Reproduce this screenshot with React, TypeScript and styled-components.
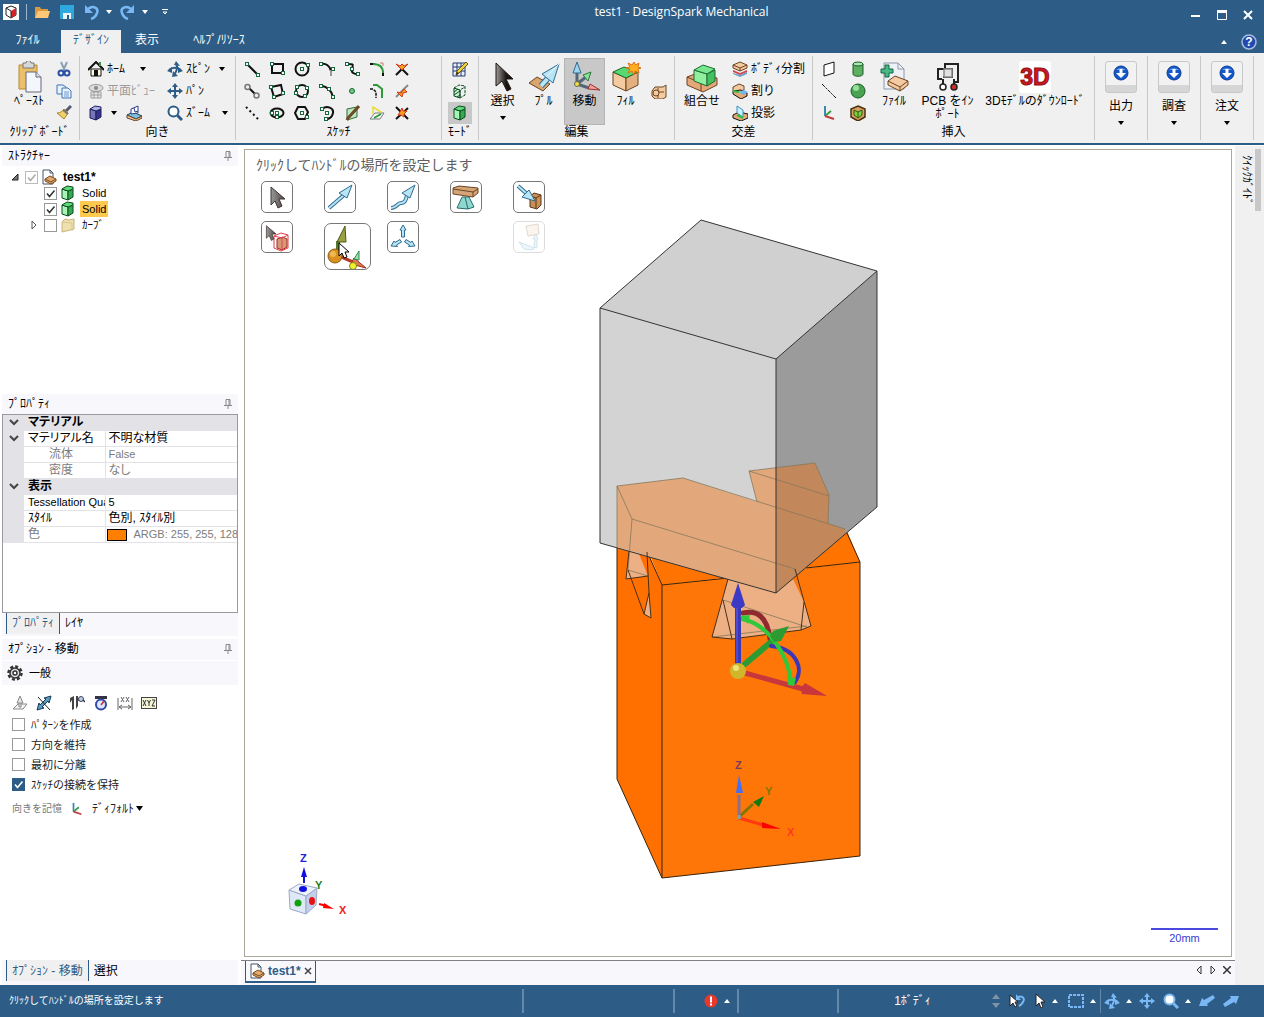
import React from "react";
import styled, { createGlobalStyle } from "styled-components";

const BLUE = "#2d5d86";
const PALE = "#f7f7fc";
const FONT = '"Liberation Sans", "Noto Sans CJK JP", sans-serif';

const Global = createGlobalStyle`
  * { box-sizing: border-box; }
  body { margin: 0; background: #fff; color: #000; font: 12px/16px ${FONT}; }
  button, input, select { font: inherit; color: inherit; }
  svg { display: block; flex: none; }
`;

/* ---------- primitives ---------- */
const Window = styled.div`
  display: flex; flex-direction: column; min-height: 100vh; overflow: hidden;
`;
const PlainButton = styled.button`
  display: flex; align-items: center; justify-content: center;
  border: 0; padding: 0; background: none; white-space: nowrap; cursor: default;
`;

const Pic = ({ w = 16, h, vb, children }: { w?: number; h?: number; vb?: string; children: React.ReactNode }) => (
  <svg width={w} height={h ?? w} viewBox={vb ?? `0 0 ${w} ${h ?? w}`} aria-hidden="true">{children}</svg>
);
const Caret = ({ up = false, color = "#000" }: { up?: boolean; color?: string }) => (
  <Pic w={6} h={4}><path d={up ? "M0 4h6L3 0z" : "M0 0h6L3 4z"} fill={color} /></Pic>
);

/* ---------- title bar ---------- */
const TitleBar = styled.header`
  display: flex; height: 30px; background: ${BLUE}; color: #fff; padding-bottom: 6px;
`;
const QuickAccess = styled.div`display: flex; align-items: center; width: 180px; padding-left: 3px;`;
const QuickButton = styled(PlainButton)<{ $w: number }>`width: ${(p) => p.$w}px; height: 24px;`;
const BarLine = styled.span`width: 1px; height: 16px; background: #9fb5c9; margin: 0 3px 0 7px;`;
const TitleText = styled.h1`
  flex: 1; margin: 0; text-align: center; font: 12px/24px "Open Sans", sans-serif;
`;
const WindowButtons = styled.div`display: flex; align-items: center; padding: 6px 3px 0 0;`;
const WindowButton = styled(PlainButton)`width: 26px; height: 24px;`;

const TabBar = styled.nav`display: flex; height: 23px; background: ${BLUE}; color: #fff;`;
const RibbonTab = styled.button<{ $active?: boolean; $w: number }>`
  width: ${(p) => p.$w}px; border: 0; padding: 0 0 4px; line-height: 18px; white-space: nowrap;
  background: ${(p) => (p.$active ? "#f0f0f0" : "transparent")};
  color: ${(p) => (p.$active ? BLUE : "#fff")};
`;
const TabBarEnd = styled.div`display: flex; align-items: center; margin-left: auto; padding-right: 7px; gap: 14px;`;

/* ---------- ribbon ---------- */
const Ribbon = styled.div`
  display: flex; height: 92px; padding: 3px 0; background: #f0f0f0; border-bottom: 2px solid ${BLUE};
`;
const Group = styled.section<{ $w: number }>`
  flex: none; display: flex; flex-direction: column; width: ${(p) => p.$w}px; height: 84px; padding-top: 2px;
  border-right: 1px solid #c8c8c8;
`;
const GroupBody = styled.div<{ $pad?: number }>`display: flex; height: 66px; padding-left: ${(p) => p.$pad ?? 0}px;`;
const GroupName = styled.div`text-align: center; line-height: 16px;`;
const Stack = styled.div<{ $w: number }>`
  display: grid; grid-template-rows: repeat(3, 22px); width: ${(p) => p.$w}px;
`;
const RowButton = styled(PlainButton)<{ $dim?: boolean }>`
  justify-content: flex-start; gap: 3px; color: ${(p) => (p.$dim ? "#9a9a9a" : "#000")};
`;
const CaretGap = styled.span<{ $w: number }>`width: ${(p) => p.$w}px; display: flex; justify-content: flex-end;`;
const RowPair = styled.div`display: flex; align-items: center; gap: 9px;`;
const SketchGrid = styled.div`
  display: grid; grid-template: repeat(3, 22px) / repeat(7, 25px);
`;
const IconButton = styled(PlainButton)<{ $on?: boolean; $w?: number }>`
  width: ${(p) => (p.$w ? p.$w + "px" : "auto")};
  background: ${(p) => (p.$on ? "#c8c8c8" : "transparent")};
`;
const BigButton = styled(PlainButton)<{ $w: number; $on?: boolean }>`
  flex-direction: column; justify-content: flex-start; width: ${(p) => p.$w}px; padding-top: 3px; height: 67px;
  line-height: 13px; white-space: normal;
  background: ${(p) => (p.$on ? "#c8c8c8" : "transparent")};
  outline: ${(p) => (p.$on ? "1px solid #b4b4b4" : "none")}; outline-offset: -1px;
`;
const BigLabel = styled.span`margin: 2px 0 8px; text-align: center; white-space: pre;`;
const FramedIcon = styled.span`
  display: flex; justify-content: center; width: 32px; height: 32px; padding-top: 3px; margin-bottom: 5px;
  border: 1px solid #c8c8c8; border-radius: 3px;
  background: linear-gradient(#f2f2f2 23px, #d6d6d6 23px);
`;

/* ---------- main area ---------- */
const Main = styled.main`flex: 1; display: flex; min-height: 0;`;
const Side = styled.aside`
  display: flex; flex-direction: column; width: 238px; flex: none; padding: 1px 0 0 2px; background: #fff;
`;
const PanelHead = styled.div<{ $h: number }>`
  display: flex; justify-content: space-between; align-items: center; height: ${(p) => p.$h}px;
  padding: 0 6px; background: ${PALE}; color: #000;
`;
const PanelTitle = styled.h2`margin: 0; font-size: 12px; font-weight: 400; line-height: 16px;`;
const Tree = styled.ul`flex: 229 1 0; margin: 0; padding: 3px 0 0 8px; list-style: none;`;
const TreeRow = styled.li<{ $indent: number }>`
  display: flex; align-items: center; height: 16px; padding-left: ${(p) => p.$indent}px;
`;
const Twisty = styled.span`width: 15px; display: flex; align-items: center;`;
const Check = styled.input`
  appearance: none; flex: none; width: 13px; height: 13px; margin: 0; border: 1px solid #999; background: #fff;
`;
const CheckBox = styled.span<{ $filled?: boolean; $pale?: boolean }>`
  display: grid; width: 13px; height: 13px; flex: none;
  > * { grid-area: 1 / 1; }
  input:checked { background: ${(p) => (p.$filled ? BLUE : "#fff")}; border-color: ${(p) => (p.$filled ? BLUE : p.$pale ? "#bbb" : "#999")}; }
  svg { pointer-events: none; }
`;
const TreeIcon = styled.span`width: 23px; padding-left: 3px;`;
const TreeLabel = styled.label<{ $hot?: boolean; $bold?: boolean }>`
  padding: 0 2px; line-height: 16px; font-size: ${(p) => (p.$bold ? 12 : 11)}px;
  background: ${(p) => (p.$hot ? "#ffc84f" : "transparent")};
  font-weight: ${(p) => (p.$bold ? 700 : 400)};
`;
const PropBox = styled.div`height: 199px; border: 1px solid #9a9a9e; background: #fff; overflow: hidden;`;
const PropTable = styled.table`
  width: 100%; table-layout: fixed; border-collapse: collapse;
  td, th { height: 16px; padding: 0; line-height: 15px; font-weight: 400; text-align: left; white-space: nowrap; overflow: hidden;
    border-bottom: 1px solid #e2e2e7; }
  font-feature-settings: "palt";
`;
const Latin = styled.span`font-size: 11px;`;
const Gutter = styled.td`width: 21px; background: #e2e2e7;`;
const SectionName = styled.th`&& { background: #e2e2e7; font-weight: 700; padding-left: 4px; }`;
const PropName = styled.th<{ $dim?: boolean; $indent?: boolean }>`
  && { padding-left: ${(p) => (p.$indent ? 25 : 4)}px; color: ${(p) => (p.$dim ? "#7c7c7c" : "#000")}; }
`;
const PropValue = styled.td<{ $dim?: boolean }>`
  && { padding-left: 3px; border-left: 1px solid #e2e2e7; color: ${(p) => (p.$dim ? "#7c7c7c" : "#000")}; }
`;
const ColorCell = styled.div`display: flex; align-items: center; gap: 7px; height: 15px;`;
const Swatch = styled.span`flex: none; width: 20px; height: 12px; margin-left: -2px; background: #ff8000; border: 1px solid #000;`;
const PanelTabs = styled.div<{ $h: number }>`
  display: flex; height: ${(p) => p.$h}px; padding-left: 4px; background: ${PALE};
`;
const PanelTab = styled.button<{ $active?: boolean }>`
  height: 21px; padding: 0 5px; border: solid ${BLUE}; border-width: ${(p) => (p.$active ? "0 1px" : "0")};
  background: ${(p) => (p.$active ? "#f0f0f0" : "none")}; color: ${(p) => (p.$active ? BLUE : "#000")};
`;
const General = styled.div`
  display: flex; align-items: center; gap: 6px; height: 24px; margin-top: 1px; padding-left: 5px; background: ${PALE}; font-size: 11px;
`;
const Options = styled.div`flex: 272 1 0; padding: 8px 0 0 10px; font-size: 11px; color: #222;`;
const OptionTools = styled.div`display: flex; height: 20px; margin-bottom: 2px;`;
const OptionTool = styled(PlainButton)<{ $gap?: boolean }>`width: 24px; justify-content: flex-start; margin-right: ${(p) => (p.$gap ? 9 : 0)}px;`;
const OptionRow = styled.label`display: flex; align-items: center; gap: 6px; height: 20px;`;
const Remember = styled.div`display: flex; align-items: center; gap: 8px; height: 28px; color: #777; font-size: 10px;`;
const RememberSelect = styled.select`
  appearance: none; border: 0; padding: 0; margin: 0; background: none; width: 42px; height: 16px; color: #222;
  font-size: 12px; line-height: 16px;
`;
const SelectWrap = styled.span`display: flex; align-items: center; gap: 2px;`;

/* ---------- document ---------- */
const Doc = styled.div`flex: 1; min-width: 0; display: flex; flex-direction: column; padding: 0 0 0 3px;`;
const CanvasFrame = styled.div`
  position: relative; flex: 1; min-height: 0; margin: 4px 3px 3px; border: 1px solid #aca899; background: #fff;
`;
const Scene = styled.svg`position: absolute; inset: 0; width: 100%; height: 100%;`;
const Overlay = styled.div`position: absolute; left: 11px; top: 6px;`;
const Prompt = styled.p`margin: 0; font-size: 14px; line-height: 18px; color: #606060; white-space: nowrap;`;
const ToolGrid = styled.div`
  display: grid; grid-template-columns: repeat(5, 63px); grid-auto-rows: 40px; padding: 7px 0 0 5px;
`;
const ToolButton = styled(PlainButton)<{ $big?: boolean; $off?: boolean }>`
  width: ${(p) => (p.$big ? 47 : 32)}px; height: ${(p) => (p.$big ? 47 : 32)}px;
  margin-top: ${(p) => (p.$big ? 2 : 0)}px; background: #fff;
  border: 1px solid #777; border-radius: ${(p) => (p.$big ? 7 : 5)}px; opacity: ${(p) => (p.$off ? 0.25 : 1)};
`;
const Triad = styled.div`position: absolute; left: 35px; bottom: 39px;`;
const ScaleBar = styled.div`
  position: absolute; right: 13px; bottom: 10px; width: 67px; border-top: 2px solid #4a4ae0; text-align: center;
  font-size: 11px; line-height: 16px; color: #3a3ad0;
`;
const DocTabs = styled.div`
  display: flex; align-items: flex-start; justify-content: space-between; height: 25px; padding: 0 2px 0 4px;
  border-top: 1px solid #7f7f86; background: ${PALE};
`;
const DocTab = styled.div`
  display: flex; align-items: center; gap: 3px; height: 22px; padding: 0 3px; border: 1px solid ${BLUE}; border-top: 0;
  border-bottom-width: 2px; color: ${BLUE}; font-weight: 700;
`;
const DocNav = styled.div`display: flex; gap: 2px; padding: 3px 0; button { width: 12px; height: 12px; }`;
const Dock = styled.div`width: 29px; flex: none; padding: 3px 3px 0 3px; background: #f0f0f0; margin-top: 1px;`;
const DockTab = styled.button`
  width: 23px; height: 62px; padding: 0; border: 0; border-right: 6px solid #c8c8c8; background: none;
  writing-mode: vertical-rl; text-orientation: sideways; font-size: 11px; line-height: 14px;
`;

/* ---------- status bar ---------- */
const Status = styled.footer`display: flex; align-items: center; height: 32px; background: ${BLUE}; color: #fff;`;
const StatusCell = styled.div<{ $w?: number; $line?: boolean }>`
  display: flex; align-items: center; justify-content: center; gap: 6px; height: 24px;
  flex: ${(p) => (p.$w ? `0 0 ${p.$w}px` : "1")};
  border-right: ${(p) => (p.$line ? "2px solid #6488a8" : "0")};
`;
const StatusText = styled.span`flex: 1; padding-left: 9px; font-size: 10px;`;
const StatusButton = styled(PlainButton)<{ $w: number }>`width: ${(p) => p.$w}px; height: 24px; gap: 6px; flex: none;`;
const StatusLine = styled.span`width: 1px; height: 24px; background: #6488a8;`;
const BarSpace = styled.span`width: 6px;`;
const LeftPad = styled(RowButton)`padding-left: 8px;`;
const CenterCell = styled.div`display: flex; justify-content: center;`;
const Spacer = styled.div`height: 3px;`;
const ErrorSlot = styled.button`display: flex; align-items: center; gap: 6px; border: 0; padding: 0 0 0 22px; background: none;`;
const StatusEnd = styled.span`width: 21px;`;

/* ---------- icons ---------- */
const Dots = ({ at }: { at: number[][] }) => (
  <>{at.map(([x, y], i) => <rect key={i} x={x - 1.5} y={y - 1.5} width="3" height="3" fill="#fff" stroke="#14683c" />)}</>
);
const K = { fill: "none", stroke: "#111", strokeWidth: 2 } as const;
const GreenCube = () => (
  <Pic><g stroke="#0b4a20" strokeLinejoin="round"><path d="M2 4l6 2v9l-6-2z" fill="#a6f5b4" /><path d="M8 6l5-2v8l-5 3z" fill="#35a850" /><path d="M2 4l5-3 6 1v2L8 6z" fill="#5ddb78" /></g></Pic>
);
const FileIcon = () => (
  <Pic><path d="M2 1h7l3 3v11H2z" fill="#fff" stroke="#456" /><path d="M9 1v3h3" fill="none" stroke="#456" /><path d="M4 10l5-3 6 3v2l-5 3-6-3z" fill="#e2aa6e" stroke="#7a4a1c" /><path d="M4 10l6 3 5-3" fill="none" stroke="#7a4a1c" /></Pic>
);
const Arrow4 = ({ color = "#2d5d86" }: { color?: string }) => (
  <Pic><path d="M8 0l3 4H9v3h3V5l4 3-4 3V9H9v3h2l-3 4-3-4h2V9H4v2L0 8l4-3v2h3V4H5z" fill={color} /></Pic>
);
const Spin = ({ color = "#2d5d86" }: { color?: string }) => (
  <Pic>
    <path d="M2 9c3-3 8-3 12 0" fill="none" stroke={color} strokeWidth="2" />
    <path d="M9 2c2 4 1 8-2 12" fill="none" stroke={color} strokeWidth="2" />
    <path d="M0 10l5-4v6zM16 10l-5-4v6zM9 0l4 5-6-1zM5 16l1-6 5 5z" fill={color} />
  </Pic>
);
const Lens = ({ stroke = "#2d5d86", fill = "#fff" }: { stroke?: string; fill?: string }) => (
  <Pic><circle cx="6.500" cy="6.500" r="5" fill={fill} stroke={stroke} strokeWidth="2" /><path d="M10.500 10.500l4.500 4.500" stroke={stroke} strokeWidth="3" /></Pic>
);
const Pin = () => (
  <Pic w={8} h={10}><path d="M2 6V.5h4V6M5 1v5M0 6.500h8M4 7v3" fill="none" stroke="#888" /></Pic>
);
const Pencil = () => (
  <><path d="M14 1l2 2-9 9-3 2 1-4z" fill="#e8d444" stroke="#6b5410" /><path d="M4 14l1-3 2 1z" fill="#222" /></>
);
const Wood = { fill: "#f4caa0", stroke: "#6b4422" } as const;
const Axes = ({ w = 16 }: { w?: number }) => (
  <Pic w={w} vb="0 0 16 16"><path d="M4 1v10" stroke="#3a8ab0" strokeWidth="2" /><path d="M4 11l6-5" stroke="#3a9a4a" strokeWidth="2" /><path d="M4 11l9 3" stroke="#c43c3c" strokeWidth="2" /></Pic>
);
const Cursor = () => (
  <><path d="M2 1v18l4-4 3 7 4-2-3-7h6z" fill="url(#cursorShade)" stroke="#3c3431" /><defs><linearGradient id="cursorShade"><stop offset="0" stopColor="#9a9898" /><stop offset="1" stopColor="#4b4442" /></linearGradient></defs></>
);

const sketchIcons: [string, React.ReactNode][] = [
  ["線", <><path d="M3 3l11 11" {...K} /><Dots at={[[3, 3], [14, 14]]} /></>],
  ["長方形", <><path d="M3 3h11v9H3z" {...K} /><Dots at={[[3, 3], [14, 12]]} /></>],
  ["円", <><circle cx="8" cy="8" r="6.500" {...K} /><Dots at={[[8, 8], [14, 4]]} /></>],
  ["接円弧", <><path d="M2 3c5-1 9 2 10 7" {...K} /><path d="M12 9v6" stroke="#999" strokeWidth="2" /><Dots at={[[2, 3], [14, 8]]} /></>],
  ["スプライン", <><path d="M3 3c9 0 5 1 5 5-1 4 2 5 6 5" {...K} /><Dots at={[[3, 3], [8, 8], [14, 13]]} /></>],
  ["コーナー", <><path d="M1 3h5M14 11v4" {...K} /><path d="M4 3c6 0 10 3 10 9" fill="none" stroke="#2a9a3a" strokeWidth="2" /><path d="M11 2h3v3" stroke="#c77" fill="none" /></>],
  ["トリム", <><path d="M2 14l6-6 6 6" {...K} /><path d="M2 3l6 6 6-6-4 2-2-2-2 2z" fill="#f6a020" stroke="#d83414" /></>],
  ["接線", <><path d="M4 4l8 8" {...K} /><circle cx="3.500" cy="4" r="2.500" fill="#eee" stroke="#777" strokeWidth="1.500" /><circle cx="12.500" cy="12.500" r="2.500" fill="#eee" stroke="#777" strokeWidth="1.500" /></>],
  ["3点長方形", <><path d="M2 4l10-2 2 9-9 3z" {...K} /><Dots at={[[2, 4], [14, 10], [5, 14]]} /></>],
  ["3点円", <><circle cx="8" cy="8" r="6" {...K} /><Dots at={[[3, 4], [13, 5], [11, 13], [2, 10]]} /></>],
  ["3点円弧", <><path d="M2 3c6 0 11 5 12 11" {...K} /><Dots at={[[2, 3], [10, 6], [14, 14]]} /></>],
  ["点", <circle cx="8" cy="8" r="2.500" fill="#6fc77a" stroke="#14683c" />],
  ["オフセット", <><path d="M1 6h3l3 3v6" fill="none" stroke="#111" strokeWidth="1.500" strokeDasharray="3 1" /><path d="M4 2h4l5 4v9" fill="none" stroke="#2a9a3a" strokeWidth="2" /></>],
  ["分割", <><path d="M2 14L14 2" {...K} stroke="#888" /><path d="M3 9l4 1 3-4 3 3-4 1-1 4z" fill="#f6a020" stroke="#d83414" /></>],
  ["構築線", <path d="M2 2l13 13" {...K} strokeDasharray="2 3" />],
  ["楕円", <><ellipse cx="8" cy="8" rx="6.500" ry="4.500" {...K} /><Dots at={[[3, 8], [8, 8], [8, 12]]} /></>],
  ["多角形", <><path d="M4 2h7l3 5-3 7H4L1 8z" {...K} /><Dots at={[[8, 8], [13, 12]]} /></>],
  ["掃引円弧", <><path d="M3 4c5-4 12-1 11 4s-5 6-7 6" {...K} /><Dots at={[[3, 4], [8, 8], [7, 14]]} /></>],
  ["面投影", <><path d="M3 4l10-2v10L3 15z" fill="#bfe6c0" stroke="#2c6a38" /><path d="M15 1L4 13l-1 2" stroke="#6b4c22" strokeWidth="3" fill="none" /></>],
  ["投影", <><path d="M1 14l5-6h9l-4 6z" fill="#fff" stroke="#777" /><path d="M5 13l7-4" stroke="#2a9a3a" strokeWidth="2" /><path d="M4 9V2l8 5" fill="none" stroke="#e6dc30" strokeWidth="1.500" /></>],
  ["曲げ", <><path d="M2 2l12 12M2 14L14 3" {...K} /><path d="M8 3l1 3 4 0-3 3 0 3-3-2-3 0 2-3z" fill="#f6a020" stroke="#d83414" /></>],
];

const DownBall = () => (
  <Pic><circle cx="8" cy="8" r="7" fill="#1557c8" stroke="#0b3c9a" /><path d="M3 5a6 4 0 0 1 10 0" fill="#6fa6f2" /><path d="M6.500 4h3v4H13l-5 5-5-5h3.500z" fill="#fff" /></Pic>
);
const BlueArrow = ({ d = "M4 26L19 13" }: { d?: string }) => (
  <><path d={d} fill="none" stroke="#2e6d92" strokeWidth="4" /><path d={d} fill="none" stroke="#b8e4f4" strokeWidth="2" /><path d="M27 3l-5 13-8-5z" fill="#b8e4f4" stroke="#2e6d92" /></>
);
const CheckMark = ({ color }: { color: string }) => (
  <Pic w={13}><path d="M3 6.500l2.500 3L10.500 3.500" fill="none" stroke={color} strokeWidth="1.500" /></Pic>
);

const Tick = ({ id, on, filled, pale }: { id: string; on?: boolean; filled?: boolean; pale?: boolean }) => (
  <CheckBox $filled={filled} $pale={pale}>
    <Check id={id} type="checkbox" defaultChecked={on} />
    {on && <CheckMark color={filled ? "#fff" : pale ? "#aaa" : "#333"} />}
  </CheckBox>
);

const Twist = () => <Pic w={10} h={7}><path d="M1 1l4 4 4-4" fill="none" stroke="#444" strokeWidth="2" /></Pic>;

/* ---------- 3D drawing ---------- */
const Model = () => (
  <Scene viewBox="245 150 986 806" preserveAspectRatio="xMidYMid meet" role="img" aria-label="3D">
    <path d="M617 545V779l45 99V585l-13-30z" fill="#ff7000" />
    <path d="M662 585l198-23V856l-198 22z" fill="#ff7608" />
    <path d="M617 545l200-40 30 26 13 31-198 23-13-32z" fill="#ff7300" />
    <path d="M617 545V779l45 99 198-22V562l-14-31M662 878V585M649 556l13 29 66-7M806 568l54-6" fill="none" stroke="#3b2308" />
    <path d="M600 308l101-88 176 51-101 88z" fill="#d0d0d0" />
    <path d="M600 308l176 51v234l-176-50z" fill="#d3d3d3" />
    <path d="M776 359l101-88v236l-101 86z" fill="#9b9b9b" />
    <path d="M617 486l66-8 93 30v85l-159-46zM749 471l27-3v40l-19-6z" fill="#e2a87c" />
    <path d="M776 468l39-5 14 32-1 28 17 6 1 4-70 60z" fill="#c2875a" />
    <g fill="#ecb084">
      <path d="M629 551l10 3 9 22-22 3zM649 593l2 25-7-4z" />
      <path d="M728 579l48 14 17-14 11 23 7 24-10 4-69 9-20-2z" />
    </g>
    <path d="M617 547v-61l66-8 162 51M617 486l15 33 163 50M632 519l-4 51 20 6M757 502l-8-31 66-8 14 32-1 28M749 471l80 25M723 600l84 27M712 637l95-11" fill="none" stroke="#87785a" strokeOpacity=".8" />
    <path d="M629 551l-3 28 22-3M628 570l16 44 7 4-2-25-5 21M647 552l2 41M728 579l-16 58 20 2 69-9 10-4-16-57M723 600l9 39M804 602l-3 28" fill="none" stroke="#4a3018" />
    <path d="M600 308l101-88 176 51v236l-101 86-176-50zl176 51v234M776 359l101-88" fill="none" stroke="#333" />
    <g fill="none" strokeLinecap="round">
      <path d="M743 613c14-3 24 3 27 26" stroke="#8e2a30" strokeWidth="5" />
      <path d="M745 664l32-27" stroke="#2c9c32" strokeWidth="6" />
      <path d="M771 646c24 2 34 22 24 36" stroke="#3a38b8" strokeWidth="4" />
      <path d="M742 619c26 5 47 36 49 65" stroke="#30c83a" strokeWidth="4" />
      <path d="M745 673l58 16" stroke="#c8373c" strokeWidth="5" />
      <path d="M738 664v-57" stroke="#3a38b8" strokeWidth="6" />
      <path d="M737 662v-54" stroke="#625fe0" strokeWidth="1" />
    </g>
    <path d="M738 583l7 22-3 3h-8l-3-3z" fill="#3d39c5" />
    <path d="M789 626l-8 15-7 1-4-6 3-5z" fill="#2c9c32" />
    <path d="M740 616l10-1-2 9zM787 677l9 1-2 8-6-1z" fill="#30c83a" />
    <path d="M827 696l-22-13-4 5 1 6z" fill="#c8373c" />
    <circle cx="738" cy="671" r="8" fill="#d0b62a" /><circle cx="736" cy="668" r="3" fill="#f0e27a" />
    <path d="M739 817v-22" stroke="#8a6f8e" strokeWidth="3" /><path d="M739 775l4 18h-7z" fill="#3f70f8" />
    <path d="M739 817l14-13" stroke="#7c7800" strokeWidth="3" /><path d="M764 796l-5 11-6-5z" fill="#117a11" />
    <path d="M739 818l24 7" stroke="#ff3a10" strokeWidth="3" /><path d="M781 829l-19-7v6z" fill="#f00" />
    <rect x="737" y="815" width="4" height="4" fill="#8a98a0" />
    <g fontFamily="Liberation Sans, sans-serif" fontSize="11" fontWeight="700">
      <text x="735" y="769" fill="#7c3a5c">Z</text><text x="765" y="795" fill="#7c7800">Y</text><text x="787" y="836" fill="#ff3a20">X</text>
    </g>
  </Scene>
);

const down = ["出力", "調査", "注文"];

export default function App() {
  return (
    <Window>
      <Global />
      <TitleBar>
        <QuickAccess>
          <Pic w={16}><rect width="16" height="16" fill="#fff" /><path d="M8 2l5 2v7l-5 3-5-3V4z" fill="#fff" stroke="#222" /><path d="M8 7l5-3v7l-5 3z" fill="#d8222a" /><path d="M3 4l5 3v7" fill="none" stroke="#222" /></Pic>
          <BarLine />
          <QuickButton $w={25} aria-label="開く"><Pic><path d="M1 14V3h5l1 2h7v9z" fill="#d99a3e" /><path d="M1 14l3-7h12l-2 7z" fill="#ffc878" /></Pic></QuickButton>
          <QuickButton $w={25} aria-label="保存"><Pic w={14}><path d="M0 0h14v14H0z" fill="#2fa9dd" /><path d="M3 8h8v6H3z" fill="#eaf4fa" /><path d="M7 10h2v4H7z" fill="#2d5d86" /></Pic></QuickButton>
          <QuickButton $w={25} aria-label="元に戻す"><Pic><path d="M4 5c5-4 11-1 9 4-1 3-3 5-6 6" fill="none" stroke="#7ab8f5" strokeWidth="2.500" /><path d="M1 1v8h8z" fill="#7ab8f5" /></Pic></QuickButton>
          <QuickButton $w={10} aria-label="履歴"><Caret color="#fff" /></QuickButton>
          <QuickButton $w={26} aria-label="やり直し"><Pic><path d="M12 5C7 1 1 4 3 9c1 3 3 5 6 6" fill="none" stroke="#7ab8f5" strokeWidth="2.500" /><path d="M15 1v8H7z" fill="#7ab8f5" /></Pic></QuickButton>
          <QuickButton $w={10} aria-label="履歴"><Caret color="#fff" /></QuickButton>
          <QuickButton $w={30} aria-label="カスタマイズ"><Pic w={6} h={6}><path d="M0 .5h6M1 3h4L3 5z" fill="none" stroke="#fff" /></Pic></QuickButton>
        </QuickAccess>
        <TitleText>test1 - DesignSpark Mechanical</TitleText>
        <WindowButtons>
          <WindowButton aria-label="最小化"><Pic w={10} h={10}><path d="M0 6h9" stroke="#fff" strokeWidth="2" /></Pic></WindowButton>
          <WindowButton aria-label="最大化"><Pic w={10} h={10}><path d="M.5 1v8.500h9V1M0 1.500h10" fill="none" stroke="#fff" /><path d="M0 0h10v3H0z" fill="#fff" /></Pic></WindowButton>
          <WindowButton aria-label="閉じる"><Pic w={10} h={10}><path d="M1 1l8 8M9 1L1 9" stroke="#fff" strokeWidth="2" /></Pic></WindowButton>
        </WindowButtons>
      </TitleBar>
      <TabBar>
        <RibbonTab $w={55}>ﾌｧｲﾙ</RibbonTab>
        <BarSpace />
        <RibbonTab $w={60} $active>ﾃﾞｻﾞｲﾝ</RibbonTab>
        <RibbonTab $w={52}>表示</RibbonTab>
        <RibbonTab $w={92}>ﾍﾙﾌﾟ/ﾘｿｰｽ</RibbonTab>
        <TabBarEnd>
          <PlainButton aria-label="リボンを閉じる"><Caret up color="#fff" /></PlainButton>
          <PlainButton aria-label="ヘルプ"><Pic><circle cx="8" cy="8" r="7" fill="#2149b0" stroke="#a9bcdc" strokeWidth="1.500" /><text x="8" y="12" textAnchor="middle" fontSize="12" fontWeight="700" fill="#fff">?</text></Pic></PlainButton>
        </TabBarEnd>
      </TabBar>

      <Ribbon>
        <Group $w={80}>
          <GroupBody $pad={6}>
            <BigButton $w={46}>
              <Pic w={32}><path d="M6 4h18v24H6z" fill="#ecc068" stroke="#b98a34" /><path d="M10 2h3a2 2 0 0 1 5 0h3v5H10z" fill="#d5d9de" stroke="#777" /><path d="M13 11h10l5 5v15H13z" fill="#f3f6fb" stroke="#667" /><path d="M23 11v5h5" fill="#dde" stroke="#667" /></Pic>
              <BigLabel>ﾍﾟｰｽﾄ</BigLabel>
            </BigButton>
            <Stack $w={24}>
              <IconButton aria-label="切り取り"><Pic><path d="M5 1l4 9M11 1L7 10" stroke="#8ba0b4" strokeWidth="2" /><circle cx="5" cy="12" r="2.500" fill="none" stroke="#2c50a4" strokeWidth="2" /><circle cx="11" cy="12" r="2.500" fill="none" stroke="#2c50a4" strokeWidth="2" /></Pic></IconButton>
              <IconButton aria-label="コピー"><Pic><path d="M1 2h6l3 2v7H1z" fill="#e9f1fb" stroke="#3f74b8" /><path d="M6 5h6l3 3v7H6z" fill="#e9f1fb" stroke="#3f74b8" /><path d="M8 9h5M8 11h5M8 13h5" stroke="#6f9ad0" /></Pic></IconButton>
              <IconButton aria-label="書式"><Pic><path d="M15 1l-5 5" stroke="#555a70" strokeWidth="3" /><path d="M8 4l4 4-4 6-7-6c4 0 5-2 7-4z" fill="#efd267" stroke="#a8842c" /><path d="M7 5l5 4" stroke="#777" strokeWidth="2" /></Pic></IconButton>
            </Stack>
          </GroupBody>
          <GroupName>ｸﾘｯﾌﾟﾎﾞｰﾄﾞ</GroupName>
        </Group>

        <Group $w={156}>
          <GroupBody $pad={8}>
            <Stack $w={79}>
              <RowButton><Pic><path d="M3 8h10v7H3z" fill="#fffbe8" stroke="#111" /><path d="M0 9l8-8 8 8" fill="none" stroke="#111" strokeWidth="2" /><path d="M12 1v4" stroke="#4a8a3a" strokeWidth="2" /><path d="M6 9h4v6H6z" fill="#111" /></Pic>ﾎｰﾑ<CaretGap $w={18}><Caret /></CaretGap></RowButton>
              <RowButton $dim><Pic><ellipse cx="8" cy="5" rx="7" ry="3.500" fill="#ddd" stroke="#999" /><circle cx="8" cy="5" r="2" fill="#888" /><path d="M3 9h10v6H3zM3 12h10M6 9v6M10 9v6" fill="none" stroke="#999" /></Pic>平面ﾋﾞｭｰ</RowButton>
              <RowPair>
                <RowButton aria-label="立方体"><Pic><path d="M2 4l6 2v9l-6-2z" fill="#7476b8" stroke="#1c1c60" /><path d="M8 6l5-2v8l-5 3z" fill="#34358a" stroke="#1c1c60" /><path d="M2 4l5-3 6 1v2L8 6z" fill="#b0b2e4" stroke="#1c1c60" /></Pic><CaretGap $w={10}><Caret /></CaretGap></RowButton>
                <RowButton aria-label="スケッチ平面"><Pic><path d="M1 10l6-3 9 4-6 3z" fill="#7cc0e0" stroke="#244" /><path d="M1 10v3l9 3 6-3v-2l-6 3z" fill="#efc08c" stroke="#643" /><path d="M5 9V4l7-3v7z" fill="#fff" stroke="#2c3c8c" /><path d="M8 3l1 4 3-1" fill="none" stroke="#2c3c8c" /></Pic></RowButton>
              </RowPair>
            </Stack>
            <Stack $w={68}>
              <RowButton><Spin />ｽﾋﾟﾝ<CaretGap $w={12}><Caret /></CaretGap></RowButton>
              <RowButton><Arrow4 />ﾊﾟﾝ</RowButton>
              <RowButton><Lens />ｽﾞｰﾑ<CaretGap $w={15}><Caret /></CaretGap></RowButton>
            </Stack>
          </GroupBody>
          <GroupName>向き</GroupName>
        </Group>

        <Group $w={206}>
          <GroupBody $pad={3}>
            <SketchGrid>
              {sketchIcons.map(([name, art]) => <IconButton key={name} aria-label={name}><Pic>{art}</Pic></IconButton>)}
            </SketchGrid>
          </GroupBody>
          <GroupName>ｽｹｯﾁ</GroupName>
        </Group>

        <Group $w={37}>
          <GroupBody $pad={6}>
            <Stack $w={24}>
              <IconButton aria-label="スケッチモード"><Pic><path d="M1 2h12v13H1zM1 6h12M1 10h12M5 2v13M9 2v13" fill="#eef" stroke="#223a6c" /><Pencil /></Pic></IconButton>
              <IconButton aria-label="断面モード"><Pic><path d="M2 5l6 2v8l-6-2z" fill="#c8f2ce" stroke="#0b4a20" /><path d="M2 5l5-3 6 1v9l-5 3V7l5-3" fill="none" stroke="#0b4a20" strokeDasharray="3 1" /><path d="M2 9l4-3M2 12l6-4M5 14l3-2" stroke="#0b4a20" /></Pic></IconButton>
              <IconButton $on aria-label="3Dモード"><GreenCube /></IconButton>
            </Stack>
          </GroupBody>
          <GroupName>ﾓｰﾄﾞ</GroupName>
        </Group>

        <Group $w={196}>
          <GroupBody $pad={3}>
            <BigButton $w={41}><Pic w={32}><path d="M9 2v23l6-5 5 10 4-2-5-10h7z" fill="url(#cursorBig)" stroke="#1c1411" /><defs><linearGradient id="cursorBig"><stop offset="0" stopColor="#a09c9a" /><stop offset=".6" stopColor="#1b1412" /></linearGradient></defs></Pic><BigLabel>選択</BigLabel><Caret /></BigButton>
            <BigButton $w={41}><Pic w={32}><path d="M1 22l8-6 13 7-7 7z" fill="#d9a56c" stroke="#6b4422" /><path d="M13 25l8-9" stroke="#2e6d92" strokeWidth="6" /><path d="M13 25l8-9" stroke="#b8e4f4" strokeWidth="4" /><path d="M31 3l-6 19-11-9z" fill="#b8e4f4" stroke="#2e6d92" /><path d="M31 3L18 16" stroke="#e8f8ff" /></Pic><BigLabel>ﾌﾟﾙ</BigLabel></BigButton>
            <BigButton $w={41} $on><Pic w={32}><path d="M8 23V10M8 23l9-7M8 23l12 4" stroke="#567" strokeWidth="3" /><path d="M8 1l4 11H4z" fill="#9fd4ee" stroke="#2e6d92" /><path d="M22 11l-3 9-5-6z" fill="#8be09a" stroke="#2c7a3a" /><path d="M31 29l-12-1 2-5z" fill="#f0a0a0" stroke="#a03030" /><circle cx="8" cy="23" r="2.500" fill="#f0e040" stroke="#665" /></Pic><BigLabel>移動</BigLabel></BigButton>
            <BigButton $w={41}><Pic w={32}><path d="M3 11l13 6v13L3 24z" fill="#f4caa0" stroke="#6b4422" /><path d="M16 17l12-6v13l-12 6z" fill="#e4b080" stroke="#6b4422" /><path d="M3 11l11-5 14 5-12 6z" fill="#58d870" stroke="#1c6a30" /><path d="M24 1l1.500 3L29 2l-1 4 3 1-3 1 1 4-4-2-1 4-2-4-4 2 2-4-4-1 4-1-2-4 4 2z" fill="#ffb020" stroke="#e07010" /></Pic><BigLabel>ﾌｨﾙ</BigLabel></BigButton>
            <IconButton $w={26} aria-label="ブレンド"><Pic><path d="M1 8l3-4h8l3-2v12l-3 2H4l-3-3z" {...Wood} /><path d="M7 5v10M7 9l6 0" fill="none" stroke="#6b4422" /><circle cx="5" cy="10" r="3" fill="#f4caa0" stroke="#6b4422" /></Pic></IconButton>
          </GroupBody>
          <GroupName>編集</GroupName>
        </Group>

        <Group $w={138}>
          <GroupBody $pad={5}>
            <BigButton $w={44}><Pic w={32}><path d="M1 16l8-3 22 4v7l-14 7-16-7z" fill="#e4a878" stroke="#6b4422" /><path d="M1 16l14 6v8" fill="none" stroke="#6b4422" /><path d="M8 9l13 4v12L8 20z" fill="#90f0a0" stroke="#1c6a30" /><path d="M21 13l8-4v11l-8 5z" fill="#45c060" stroke="#1c6a30" /><path d="M8 9l9-5 12 4-8 5z" fill="#78e890" stroke="#1c6a30" /></Pic><BigLabel>組合せ</BigLabel></BigButton>
            <Stack $w={80}>
              <LeftPad><Pic><path d="M1 4l7-3 7 3v3l-7 3-7-3z" {...Wood} /><path d="M1 9l7 3 7-3v2l-7 3-7-3z" fill="#d8424a" /><path d="M1 12l7 2 7-3v2l-7 3-7-3z" fill="#6aa0c8" /><path d="M1 4l7 3 7-3M8 7v3" fill="none" stroke="#6b4422" /></Pic>ﾎﾞﾃﾞｨ分割</LeftPad>
              <LeftPad><Pic><path d="M1 4l6-3 5 2v4l-5 3-6-2z" {...Wood} /><path d="M1 8l8-1 6 3v3l-6 3-8-5z" fill="#e4a878" stroke="#111" /><path d="M7 9l5-2 4 2-5 3z" fill="#6cb8e8" /><path d="M1 8l6 1" stroke="#2ac040" strokeWidth="2" /></Pic>割り</LeftPad>
              <LeftPad><Pic><path d="M1 10l6-3 9 2v4l-7 3-8-3z" fill="#e4a878" stroke="#111" /><path d="M5 1l6 4v7l-6-4z" fill="#cdefff" stroke="#3a90c0" /><path d="M5 10l6 3" stroke="#2ac040" strokeWidth="2" /></Pic>投影</LeftPad>
            </Stack>
          </GroupBody>
          <GroupName>交差</GroupName>
        </Group>

        <Group $w={282}>
          <GroupBody $pad={2}>
            <Stack $w={28}>
              <IconButton aria-label="平面"><Pic><path d="M3 4l10-3v11L3 15z" fill="#fff" stroke="#111" /></Pic></IconButton>
              <IconButton aria-label="軸"><Pic><path d="M1 1l14 14" stroke="#111" strokeDasharray="4 1 2 1" /></Pic></IconButton>
              <IconButton aria-label="原点"><Axes /></IconButton>
            </Stack>
            <Stack $w={30}>
              <IconButton aria-label="円筒"><Pic><path d="M3 3v10c0 3 10 3 10 0V3" fill="#5cb060" stroke="#1c5a28" /><ellipse cx="8" cy="3" rx="5" ry="2" fill="#a8e8ac" stroke="#1c5a28" /></Pic></IconButton>
              <IconButton aria-label="球"><Pic><circle cx="8" cy="8" r="7" fill="#4aa352" stroke="#1c5a28" /><circle cx="6" cy="5" r="3" fill="#9ade9e" /></Pic></IconButton>
              <IconButton aria-label="シェル"><Pic><path d="M8 1l7 3v8l-7 4-7-4V4z" fill="#d8a060" stroke="#4a3010" strokeWidth="1.500" /><path d="M4 5l4 2 4-2v5l-4 3-4-3z" fill="#80d040" stroke="#2a5a10" /><path d="M8 7v6" stroke="#2a5a10" /></Pic></IconButton>
            </Stack>
            <BigButton $w={42}><Pic w={32}><path d="M6 2h14l6 6v20H6z" fill="#eef2f8" stroke="#8a98a8" /><path d="M20 2v6h6" fill="none" stroke="#8a98a8" /><path d="M7 4h4v4h4v4h-4v4H7v-4H3V8h4z" fill="#48b888" stroke="#14683c" /><path d="M10 20l7-5 13 5v4l-8 6-12-6z" {...Wood} /><path d="M10 20l12 6 8-6M22 26v4" fill="none" stroke="#6b4422" /></Pic><BigLabel>ﾌｧｲﾙ</BigLabel></BigButton>
            <BigButton $w={65}><Pic w={32}><path d="M10 18H6V8h7V3h13v18h-5M13 8h7v8h-9" fill="none" stroke="#222" strokeWidth="2" /><path d="M11 18v5M22 18v5" stroke="#222" strokeWidth="2" /><path d="M12 8h8v8h-8z" fill="#e0e0e0" stroke="#888" strokeWidth="1.500" /><circle cx="11" cy="26" r="3" fill="#fff" stroke="#222" strokeWidth="1.500" /><circle cx="22" cy="26" r="3" fill="#d42a2a" stroke="#222" strokeWidth="1.500" /></Pic><BigLabel>{"PCB をｲﾝ\nﾎﾟｰﾄ"}</BigLabel></BigButton>
            <BigButton $w={110}><Pic w={32}><rect width="32" height="32" rx="3" fill="#fff" /><text x="16" y="24" textAnchor="middle" fontFamily="Liberation Sans" fontSize="23" fontWeight="700" fill="#d01820" stroke="#8c1014" strokeWidth="1">3D</text></Pic><BigLabel>3Dﾓﾃﾞﾙのﾀﾞｳﾝﾛｰﾄﾞ</BigLabel></BigButton>
          </GroupBody>
          <GroupName>挿入</GroupName>
        </Group>

        {down.map((name) => (
          <Group key={name} $w={53}>
            <GroupBody>
              <BigButton $w={52}><FramedIcon><DownBall /></FramedIcon><BigLabel>{name}</BigLabel><Caret /></BigButton>
            </GroupBody>
          </Group>
        ))}
      </Ribbon>

      <Main>
        <Side>
          <PanelHead $h={20}><PanelTitle>ｽﾄﾗｸﾁｬｰ</PanelTitle><Pin /></PanelHead>
          <Tree>
            <TreeRow $indent={0}><Twisty><Pic w={10} h={10}><path d="M8 2v6H2z" fill="#777" stroke="#222" /></Pic></Twisty><Tick id="t0" on pale /><TreeIcon><FileIcon /></TreeIcon><TreeLabel htmlFor="t0" $bold>test1*</TreeLabel></TreeRow>
            <TreeRow $indent={34}><Tick id="t1" on /><TreeIcon><GreenCube /></TreeIcon><TreeLabel htmlFor="t1">Solid</TreeLabel></TreeRow>
            <TreeRow $indent={34}><Tick id="t2" on /><TreeIcon><GreenCube /></TreeIcon><TreeLabel htmlFor="t2" $hot>Solid</TreeLabel></TreeRow>
            <TreeRow $indent={19}><Twisty><Pic w={10} h={10}><path d="M3 1l4 4-4 4z" fill="#fff" stroke="#555" /></Pic></Twisty><Tick id="t3" /><TreeIcon><Pic><path d="M2 5l3-3 4 1 5-1v10L2 15z" fill="#efe0b0" stroke="#c8b47c" /><path d="M2 5l10 1v8" fill="none" stroke="#d8c690" /></Pic></TreeIcon><TreeLabel htmlFor="t3">ｶｰﾌﾞ</TreeLabel></TreeRow>
          </Tree>
          <PanelHead $h={20}><PanelTitle>ﾌﾟﾛﾊﾟﾃｨ</PanelTitle><Pin /></PanelHead>
          <PropBox>
            <PropTable>
              <colgroup><col width="21" /><col width="81" /><col /></colgroup>
              <tbody>
                <tr><Gutter><CenterCell><Twist /></CenterCell></Gutter><SectionName colSpan={2}>マテリアル</SectionName></tr>
                <tr><Gutter><CenterCell><Twist /></CenterCell></Gutter><PropName>マテリアル名</PropName><PropValue>不明な材質</PropValue></tr>
                <tr><Gutter /><PropName $dim $indent>流体</PropName><PropValue $dim><Latin>False</Latin></PropValue></tr>
                <tr><Gutter /><PropName $dim $indent>密度</PropName><PropValue $dim>なし</PropValue></tr>
                <tr><Gutter><CenterCell><Twist /></CenterCell></Gutter><SectionName colSpan={2}>表示</SectionName></tr>
                <tr><Gutter /><PropName><Latin>Tessellation Qua</Latin></PropName><PropValue><Latin>5</Latin></PropValue></tr>
                <tr><Gutter /><PropName>ｽﾀｲﾙ</PropName><PropValue>色別, ｽﾀｲﾙ別</PropValue></tr>
                <tr><Gutter /><PropName $dim>色</PropName><PropValue $dim><ColorCell><Swatch /><Latin>ARGB: 255, 255, 128</Latin></ColorCell></PropValue></tr>
              </tbody>
            </PropTable>
          </PropBox>
          <PanelTabs $h={23}><PanelTab $active>ﾌﾟﾛﾊﾟﾃｨ</PanelTab><PanelTab>ﾚｲﾔ</PanelTab></PanelTabs>
          <Spacer />
          <PanelHead $h={21}><PanelTitle>ｵﾌﾟｼｮﾝ - 移動</PanelTitle><Pin /></PanelHead>
          <General><Pic><circle cx="8" cy="8" r="6.500" fill="none" stroke="#333" strokeWidth="2.500" strokeDasharray="3 2" /><circle cx="8" cy="8" r="5" fill="#ddd" stroke="#333" strokeWidth="1.500" /><circle cx="8" cy="8" r="2" fill="#fff" stroke="#333" strokeWidth="1.500" /></Pic>一般</General>
          <Options>
            <OptionTools>
              <OptionTool aria-label="平面に移動"><Pic><path d="M1 14l5-5h9l-4 5z" fill="#f4f4f4" stroke="#888" /><path d="M8 1l3 7H5zM7 8v4h2V8" fill="#e8e8e8" stroke="#888" /></Pic></OptionTool>
              <OptionTool $gap aria-label="方向"><Pic><path d="M15 1l-2 7-1-2-6 6 2 1-7 2 2-7 1 2 6-6-2-1z" fill="#5c9cc4" stroke="#173a54" /><path d="M2 2l12 13" stroke="#222" /></Pic></OptionTool>
              <OptionTool aria-label="ルーラー"><Pic><path d="M1 3l4-2v13l-2 1V5L1 8zM7 1h2v10l-2 3zM9 3h3v3H9z" fill="#444" /><circle cx="12" cy="4" r="2.500" fill="#bcd" stroke="#446" /><path d="M14 5l2 2" stroke="#333" strokeWidth="1.500" /></Pic></OptionTool>
              <OptionTool aria-label="計測"><Pic><path d="M2 1h12v3H2z" fill="#334" /><circle cx="8" cy="9.500" r="5" fill="#dfe8ff" stroke="#2f4aa8" strokeWidth="2" /><path d="M8 10l3-4" stroke="#c33" strokeWidth="1.500" /></Pic></OptionTool>
              <OptionTool aria-label="寸法"><Pic><path d="M1 3v12M15 3v12M2 12h12M5 10l-3 2 3 2M11 10l3 2-3 2M4 2l3 5M7 2L4 7M9 2l3 5M12 2L9 7" fill="none" stroke="#666" /></Pic></OptionTool>
              <OptionTool aria-label="座標"><Pic><rect x=".5" y="2.500" width="15" height="11" fill="#f6f6d8" stroke="#444" /><path d="M2 5l3 6M5 5l-3 6M6.500 5L8 8l1.500-3M8 8v3M11 5h3l-3 6h3" fill="none" stroke="#333" /></Pic></OptionTool>
            </OptionTools>
            <OptionRow><Tick id="o1" />ﾊﾟﾀｰﾝを作成</OptionRow>
            <OptionRow><Tick id="o2" />方向を維持</OptionRow>
            <OptionRow><Tick id="o3" />最初に分離</OptionRow>
            <OptionRow><Tick id="o4" on filled />ｽｹｯﾁの接続を保持</OptionRow>
            <Remember>
              <label htmlFor="orient">向きを記憶</label>
              <Axes w={14} />
              <SelectWrap><RememberSelect id="orient"><option>ﾃﾞｨﾌｫﾙﾄ</option></RememberSelect><Pic w={7} h={5}><path d="M0 0h7L3.500 5z" /></Pic></SelectWrap>
            </Remember>
          </Options>
          <PanelTabs $h={25}><PanelTab $active>ｵﾌﾟｼｮﾝ - 移動</PanelTab><PanelTab>選択</PanelTab></PanelTabs>
        </Side>

        <Doc>
          <CanvasFrame>
            <Model />
            <Overlay>
              <Prompt>ｸﾘｯｸしてﾊﾝﾄﾞﾙの場所を設定します</Prompt>
              <ToolGrid>
                <ToolButton aria-label="選択"><Pic w={30}><g transform="translate(7 4)"><Cursor /></g></Pic></ToolButton>
                <ToolButton aria-label="方向"><Pic w={30}><BlueArrow /></Pic></ToolButton>
                <ToolButton aria-label="軌道"><Pic w={30}><BlueArrow d="M3 26c6 0 6-5 10-5s5-3 6-8" /></Pic></ToolButton>
                <ToolButton aria-label="固定"><Pic w={30}><path d="M11 15h7l5 10-6 2-11-1z" fill="#8cd8d0" stroke="#2c6a6a" /><path d="M14 15l3 12" stroke="#2c6a6a" /><path d="M2 6l6-2 19 2v5l-5 4-20-3z" fill="#d4a476" stroke="#6b4422" /><path d="M2 7l20 3 5-3M22 10v5" fill="none" stroke="#6b4422" /></Pic></ToolButton>
                <ToolButton aria-label="まで"><Pic w={30}><path d="M16 14l4-3 7 2v10l-4 4-7-2z" fill="#c89058" stroke="#5a3414" /><path d="M16 14l6 2 5-3M22 16v10" fill="none" stroke="#5a3414" /><path d="M4 4l8 7" stroke="#2e6d92" strokeWidth="4" /><path d="M4 4l8 7" stroke="#b8e4f4" strokeWidth="2" /><path d="M21 19L15 8l-7 7z" fill="#b8e4f4" stroke="#2e6d92" /></Pic></ToolButton>
                <ToolButton aria-label="コンポーネント"><Pic w={30}><g transform="translate(3 3) scale(.7)"><Cursor /></g><path d="M15 17l6-2 4 2v8l-5 3-5-2z" fill="#d49a78" stroke="#a02828" /><path d="M12 14l7-3 7 2v13l-7 3-7-3zM12 14l8 2 6-3M20 16v12" fill="none" stroke="#e04048" /></Pic></ToolButton>
                <ToolButton $big aria-label="アンカー"><Pic w={45}><path d="M13 27V17" stroke="#557a30" strokeWidth="4" /><path d="M20 2l1 16-9 0z" fill="#98a040" stroke="#4a5a18" /><path d="M14 32l14 6" stroke="#b83a28" strokeWidth="3" /><path d="M41 44l-15-4 3-6z" fill="#d88050" stroke="#a02820" /><path d="M34 27l0 9-5-1z" fill="#a0e0b0" stroke="#2c8a4a" /><path d="M44 49l-9-1 2-3z" fill="#f0b0b0" stroke="#a02820" /><circle cx="10" cy="32" r="7" fill="#d89020" stroke="#8a5a10" /><circle cx="8" cy="30" r="3" fill="#f0b850" /><circle cx="28" cy="42" r="3.500" fill="#f0f030" stroke="#8a8a10" /><path d="M14 19v13l3-3 2 5 3-1-2-5h4z" fill="#fff" stroke="#000" /></Pic></ToolButton>
                <ToolButton aria-label="放射"><Pic w={30}><g fill="#b8e4f4" stroke="#2e6d92"><path d="M15 3l3 5h-1.500v7h-3V8H12z" /><path d="M3 24l3-5 1 1.500 5-3 1.500 2.500-5 3 1 1.500z" /><path d="M27 24l-3-5-1 1.500-5-3-1.500 2.500 5 3-1 1.500z" /></g></Pic></ToolButton>
                <span />
                <ToolButton $off aria-label="投影面"><Pic w={30}><path d="M12 4l12-2 1 10-11 2z" fill="#f0d4b8" stroke="#8a6a4a" /><path d="M5 20l15 6-1 2-9-1z" fill="#b8e4f4" stroke="#4a90b8" /><path d="M20 25l1-8h-2l3-5 2 5h-1v9z" fill="#b8e4f4" stroke="#4a90b8" /></Pic></ToolButton>
              </ToolGrid>
            </Overlay>
            <Triad>
              <svg width="70" height="66" viewBox="280 851 70 66" aria-hidden="true">
                <g stroke="#9aa8c8"><path d="M289 890l17 6v18l-16-5z" fill="#dfe8f6" /><path d="M306 896l11-8-1 17-10 9z" fill="#c4d0ea" /><path d="M289 890l10-6 18 4-11 8z" fill="#eef3fb" /></g>
                <ellipse cx="303" cy="889" rx="4" ry="3" fill="#1010e0" /><circle cx="298" cy="903" r="3.500" fill="#10a010" /><ellipse cx="312" cy="901" rx="3" ry="4" fill="#e81010" />
                <path d="M304 883v-9" stroke="#1010e0" strokeWidth="2" /><path d="M304 867l3 10h-6z" fill="#1010e0" />
                <path d="M319 904l8 2" stroke="#f00" strokeWidth="2" /><path d="M334 909l-10-6-1 5z" fill="#f00" />
                <g fontFamily="Liberation Sans, sans-serif" fontSize="11" fontWeight="700"><text x="300" y="862" fill="#2020e0">Z</text><text x="315" y="889" fill="#208020">Y</text><text x="339" y="914" fill="#f02020">X</text></g>
              </svg>
            </Triad>
            <ScaleBar>20mm</ScaleBar>
          </CanvasFrame>
          <DocTabs>
            <DocTab><FileIcon />test1*<PlainButton aria-label="タブを閉じる"><Pic w={8}><path d="M1 1l6 6M7 1L1 7" stroke="#444" strokeWidth="1.500" /></Pic></PlainButton></DocTab>
            <DocNav>
              <PlainButton aria-label="前へ"><Pic w={6} h={10}><path d="M5 1v8L1 5z" fill="none" stroke="#333" /></Pic></PlainButton>
              <PlainButton aria-label="次へ"><Pic w={6} h={10}><path d="M1 1v8l4-4z" fill="none" stroke="#333" /></Pic></PlainButton>
              <PlainButton aria-label="閉じる"><Pic w={8}><path d="M0 0l8 8M8 0L0 8" stroke="#333" strokeWidth="1.500" /></Pic></PlainButton>
            </DocNav>
          </DocTabs>
        </Doc>
        <Dock><DockTab>ｸｲｯｸｶﾞｲﾄﾞ</DockTab></Dock>
      </Main>

      <Status>
        <StatusCell $line><StatusText>ｸﾘｯｸしてﾊﾝﾄﾞﾙの場所を設定します</StatusText></StatusCell>
        <StatusCell $w={151} $line />
        <StatusCell $w={64} $line><ErrorSlot><Pic w={14}><circle cx="7" cy="7" r="6.500" fill="#e8382c" /><path d="M7 2.500v6M7 9.500v2" stroke="#fff" strokeWidth="2" /></Pic><Caret up color="#fff" /></ErrorSlot></StatusCell>
        <StatusCell $w={100} $line />
        <StatusCell $w={147}>1ﾎﾞﾃﾞｨ</StatusCell>
        <StatusButton $w={20} aria-label="上下"><Pic w={8} h={16}><path d="M0 6h8L4 1zM0 10h8l-4 5z" fill="#7f93a5" /></Pic></StatusButton>
        <StatusButton $w={22} aria-label="選択を戻す"><Pic><path d="M1 2v11l3-3 2 4 2-1-2-4h3z" fill="#fff" stroke="#222" /><path d="M9 4c5-2 7 2 5 5-1 2-2 3-4 4" fill="none" stroke="#7ab8f5" strokeWidth="2" /><path d="M7 1v6h5z" fill="#7ab8f5" /></Pic></StatusButton>
        <StatusButton $w={36} aria-label="選択方法"><Pic w={12} h={16}><path d="M2 1v12l3-3 2 5 2-1-2-5h4z" fill="#fff" stroke="#222" /></Pic><Caret up color="#fff" /></StatusButton>
        <StatusButton $w={36} aria-label="範囲選択"><Pic><path d="M1 2h14v12H1z" fill="none" stroke="#7ab8f5" strokeWidth="2" strokeDasharray="3 1" /></Pic><Caret up color="#fff" /></StatusButton>
        <StatusLine />
        <StatusButton $w={34} aria-label="スピン"><Spin color="#7ab8f5" /><Caret up color="#fff" /></StatusButton>
        <StatusButton $w={24} aria-label="パン"><Arrow4 color="#7ab8f5" /></StatusButton>
        <StatusButton $w={36} aria-label="ズーム"><Lens stroke="#7ab8f5" /><Caret up color="#fff" /></StatusButton>
        <StatusButton $w={24} aria-label="前のビュー"><Pic><path d="M0 13l3-8 2 2 9-5 2 3-8 6 1 2z" fill="#7ab8f5" /></Pic></StatusButton>
        <StatusButton $w={24} aria-label="次のビュー"><Pic><path d="M16 3l-3 8-2-2-9 5-2-3 8-6-1-2z" fill="#7ab8f5" /></Pic></StatusButton>
        <StatusEnd />
      </Status>
    </Window>
  );
}
